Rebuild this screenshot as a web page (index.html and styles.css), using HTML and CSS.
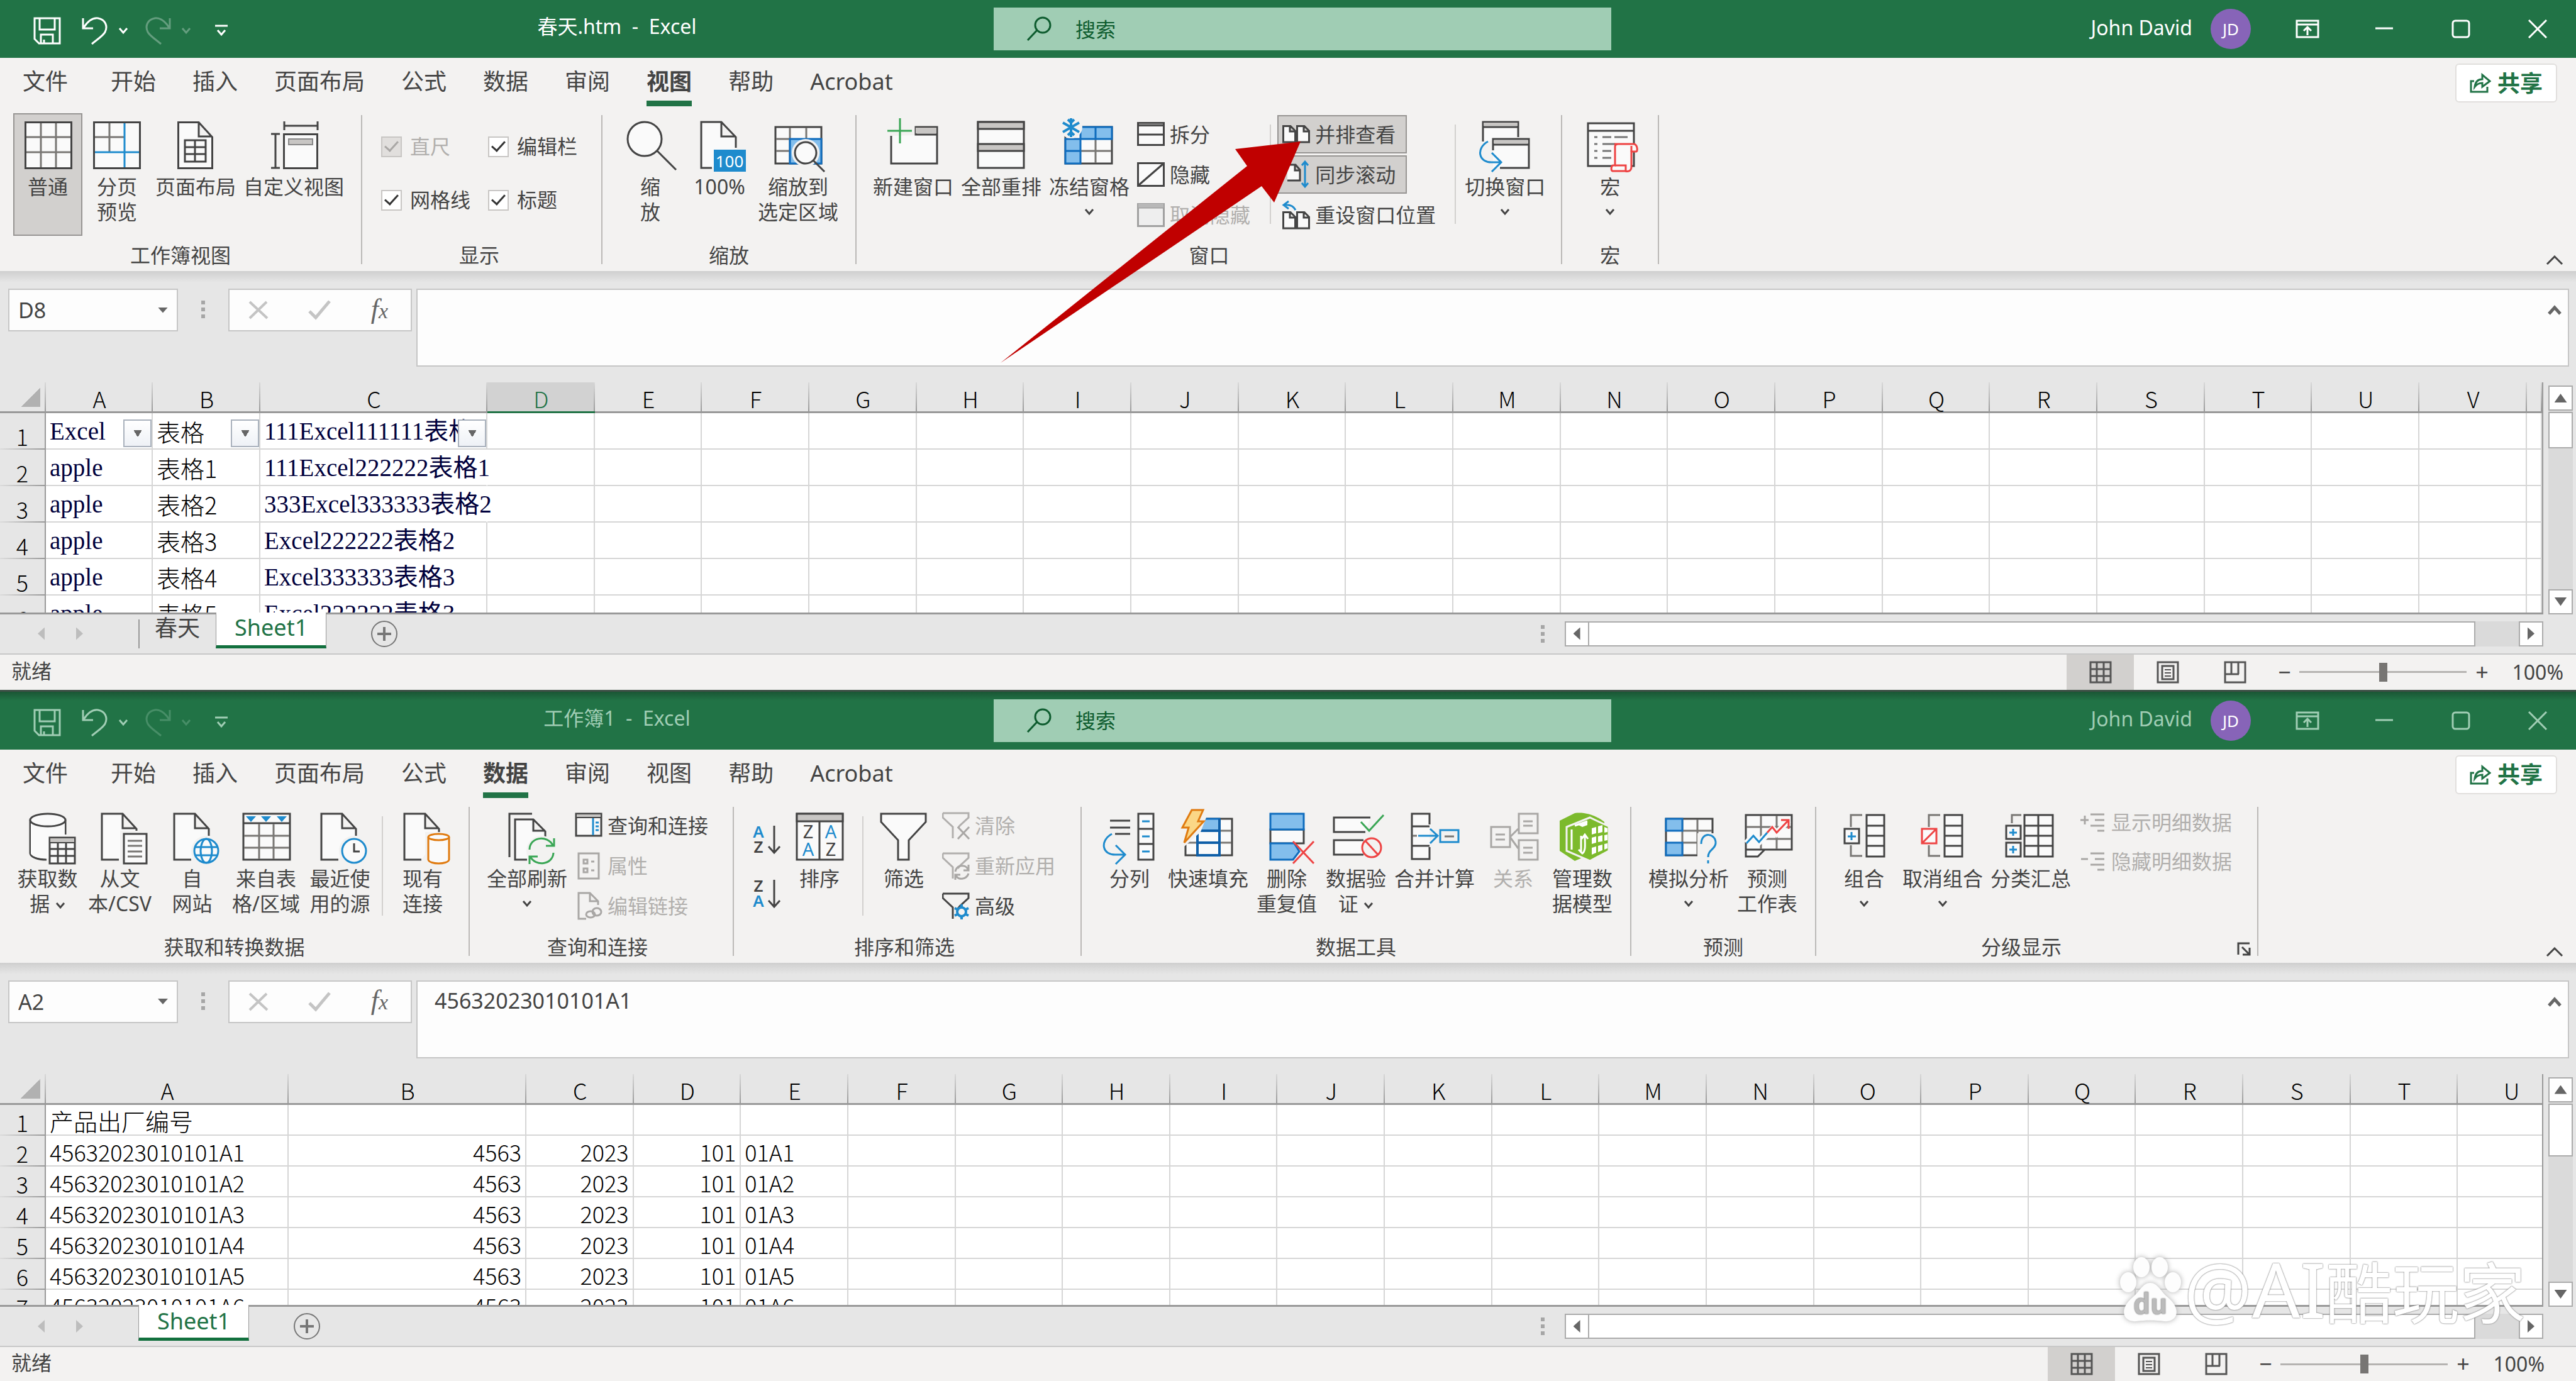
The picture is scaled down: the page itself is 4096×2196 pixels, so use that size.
FILE: index.html
```html
<!DOCTYPE html>
<html lang="zh-CN">
<head>
<meta charset="utf-8">
<title>Excel</title>
<link rel="stylesheet" href="styles.css">
</head>
<body>
<svg class="sprite" aria-hidden="true">
  <symbol id="save" viewBox="0 0 44 44"><path class="c" d="M2 2H42V42H9L2 35ZM10 2V20H34V2M12 42V28H31V42M17 42V36"/></symbol>
  <symbol id="undo" viewBox="0 0 42 44"><path class="c" d="M2 2V18H18M3 17C10 6 18 1 26 2C37 4 42 14 37 24C34 30 24 36 16 43"/></symbol>
  <symbol id="redo" viewBox="0 0 42 44"><path class="c" d="M40 2V18H24M39 17C32 6 24 1 16 2C5 4 0 14 5 24C8 30 18 36 26 43"/></symbol>
  <symbol id="chev" viewBox="0 0 16 12"><path class="c" d="M2 2L8 9L14 2"/></symbol>
  <symbol id="more" viewBox="0 0 20 20"><path class="c" d="M0 2H20M4 9L10 16L16 9"/></symbol>
  <symbol id="find" viewBox="0 0 40 40"><circle class="c" cx="26" cy="14" r="12"/><path class="c" d="M17 22L2 38"/></symbol>
  <symbol id="ribbonopt" viewBox="0 0 38 30"><path class="c" d="M2 2H36V28H2ZM2 8H36M19 25V13M13 18L19 12L25 18"/></symbol>
  <symbol id="min" viewBox="0 0 30 30"><path class="c" d="M1 14H29"/></symbol>
  <symbol id="max" viewBox="0 0 30 30"><rect class="c" x="2" y="2" width="26" height="26" rx="4"/></symbol>
  <symbol id="close" viewBox="0 0 30 30"><path class="c" d="M1 1L29 29M29 1L1 29"/></symbol>
  <symbol id="share" viewBox="0 0 34 32"><path class="c" d="M7 13H2V30H28V22M8 22C9 14 13 10 20 10V3L32 13L20 22V16C15 16 11 18 8 22Z"/></symbol>
  <symbol id="up" viewBox="0 0 28 16"><path class="c" d="M2 14L14 2L26 14"/></symbol>
  <symbol id="upbold" viewBox="0 0 22 16"><path d="M2 14L11 4L20 14" fill="none" stroke="#666" stroke-width="5"/></symbol>
  <symbol id="cancel" viewBox="0 0 32 30"><path d="M2 2L30 28M29 2L2 28" fill="none" stroke="#c4c4c4" stroke-width="4"/></symbol>
  <symbol id="accept" viewBox="0 0 36 32"><path d="M2 18L12 28L34 2" fill="none" stroke="#c4c4c4" stroke-width="5"/></symbol>
  <symbol id="plus" viewBox="0 0 44 44"><circle cx="22" cy="22" r="20" fill="none" stroke="#777" stroke-width="2"/><path d="M22 11V33M11 22H33" stroke="#777" stroke-width="4"/></symbol>
  <symbol id="v1" viewBox="0 0 36 36"><path d="M2 2H34V34H2ZM12 2V34M23 2V34M2 13H34M2 24H34" fill="none" stroke="#555" stroke-width="3"/></symbol>
  <symbol id="v2" viewBox="0 0 36 36"><path d="M2 2H34V34H2ZM9 8H27V29H9Z" fill="none" stroke="#555" stroke-width="3"/><path d="M13 14H23M13 19H23M13 24H23" stroke="#555" stroke-width="2"/></symbol>
  <symbol id="v3" viewBox="0 0 36 36"><path d="M2 2H34V34H2ZM12 2V20M23 2V21M2 21H24" fill="none" stroke="#555" stroke-width="3"/></symbol>
  <symbol id="funnel" viewBox="0 0 44 44"><path d="M1 2H42V9L28 22L25 26M17 42V24L1 9V2" fill="none" stroke="currentColor" stroke-width="3"/></symbol>
  <symbol id="doc" viewBox="0 0 84 88"><path class="k" d="M40 80H13V7H46L68 31V42M46 7V30H68"/></symbol>
</svg>

<section class="window window-front">
  <header class="titlebar">
    <div class="title-left">
      <div class="quick">
        <button aria-label="保存"><svg width="44" height="44"><use href="#save"/></svg></button>
        <button class="undo" aria-label="撤消"><svg width="42" height="44"><use href="#undo"/></svg></button>
        <button class="drop" aria-label="撤消选项"><svg width="16" height="12"><use href="#chev"/></svg></button>
        <button class="redo faded" aria-label="恢复"><svg width="42" height="44"><use href="#redo"/></svg></button>
        <button class="drop faded" aria-label="恢复选项"><svg width="16" height="12"><use href="#chev"/></svg></button>
        <button class="custom" aria-label="自定义快速访问工具栏"><svg width="20" height="20"><use href="#more"/></svg></button>
      </div>
      <h1>春天.htm&nbsp; -&nbsp; Excel</h1>
    </div>
    <label class="search"><svg width="40" height="40"><use href="#find"/></svg><input type="text" placeholder="搜索" aria-label="搜索"></label>
    <div class="title-right">
      <span class="user">John David</span><span class="avatar">JD</span>
      <button aria-label="功能区显示选项"><svg width="38" height="30"><use href="#ribbonopt"/></svg></button>
      <button aria-label="最小化"><svg width="30" height="30"><use href="#min"/></svg></button>
      <button aria-label="最大化"><svg width="30" height="30"><use href="#max"/></svg></button>
      <button aria-label="关闭"><svg width="30" height="30"><use href="#close"/></svg></button>
    </div>
  </header>
  <nav class="tabs">
    <a class="file" href="#file">文件</a><a href="#home">开始</a><a href="#insert">插入</a><a href="#layout">页面布局</a><a href="#formulas">公式</a><a href="#data">数据</a><a href="#review">审阅</a><a class="active" href="#view">视图</a><a href="#help">帮助</a><a href="#acrobat">Acrobat</a>
    <button class="share"><svg width="34" height="32"><use href="#share"/></svg>共享</button>
  </nav>
  <div class="ribbon">
    <section class="group">
      <div class="tools">
        <button class="tile pressed"><svg class="icon"><path class="k" d="M6.500 7.500H79.500V80.500H6.500Z"/><path class="g" d="M31 9V79M55 9V79M8 31H78M8 55H78"/></svg>普通</button>
        <button class="tile"><svg class="icon"><path class="k" d="M5.500 7.500H78.500V80.500H5.500Z"/><path class="g" d="M30 9V54M7 31H53"/><path class="b" d="M54 9V79M7 55H77"/></svg>分页<br>预览</button>
        <button class="tile"><svg class="icon"><path class="k" d="M14.500 7.500H47L68.500 31V80.500H14.500ZM47 7.500V30H68"/><path class="k" d="M25 36H58V70H25ZM41 36V70M25 47H58M25 58H58"/></svg>页面布局</button>
        <button class="tile"><svg class="icon"><path class="k" d="M26.500 26.500H79.500V80.500H26.500Z"/><path class="n" d="M27 6V20M80 6V20M27 13H80M6 26H20M6 80H20M13 26V80"/><path fill="#c8c6c4" stroke="#888" stroke-width="2" d="M34 34H72V43H34Z"/></svg>自定义视图</button>
      </div>
      <h2>工作簿视图</h2>
    </section>
    <section class="group show">
      <div class="checks">
        <label class="off"><input type="checkbox" checked disabled>直尺</label>
        <label><input type="checkbox" checked>编辑栏</label>
        <label><input type="checkbox" checked>网格线</label>
        <label><input type="checkbox" checked>标题</label>
      </div>
      <h2>显示</h2>
    </section>
    <section class="group">
      <div class="tools">
        <button class="tile"><svg class="icon"><circle class="k" cx="33" cy="34" r="27"/><path class="n" d="M53 53L83 83"/></svg>缩<br>放</button>
        <button class="tile"><svg class="icon"><path class="k" d="M30 80H13V7H45L68 31V48M45 7V30H68"/><path fill="#1e8bcd" d="M33 51H84V86H33Z"/><text x="58" y="79" class="badge">100</text></svg>100%</button>
        <button class="tile"><svg class="icon"><path class="k" d="M6 15H79V73H6Z"/><path class="g" d="M29 16V72M55 16V34M7 34H29M7 53H29"/><path class="f" d="M29 34H79V73H29Z"/><circle cx="54" cy="56" r="22" fill="#f3f2f1"/><circle class="k" cx="54" cy="56" r="17"/><path class="n" d="M66 68L84 86"/></svg>缩放到<br>选定区域</button>
      </div>
      <h2>缩放</h2>
    </section>
    <section class="group view-window">
      <div class="tools">
        <button class="tile"><svg class="icon"><path class="k" d="M7 29V73H80V15H46V27H80M7 29H7"/><path fill="#c8c6c4" d="M46 16H79V25H46Z"/><path d="M21 1V41M1 21H40" class="e"/></svg>新建窗口</button>
        <button class="tile"><svg class="icon"><path class="k" d="M5 7H78V80H5Z"/><path fill="#c8c6c4" stroke="#444" stroke-width="3" d="M5 7H78V18H5ZM5 42H78V53H5Z"/></svg>全部重排</button>
        <button class="tile"><svg class="icon"><path class="k" d="M4 15H78V73H4Z"/><path class="g" d="M52 34V72M29 53H77"/><path class="f" d="M28 15H78V34H28ZM4 34H28V73H4ZM52 15V34M4 53H28"/><circle cx="13" cy="15" r="18" fill="#f3f2f1"/><path d="M13 1V31M0 8L26 23M0 23L26 8M8 3L13 8L18 3M8 28L13 23L18 28" fill="none" stroke="#1e8bcd" stroke-width="4"/></svg>冻结窗格<svg class="chev"><use href="#chev"/></svg></button>
        <div class="stack">
          <button class="small"><svg class="mini"><path class="k" d="M1.500 3.500H42.500V38.500H1.500ZM2 22H42"/><path fill="#777" stroke="#444" stroke-width="2" d="M2 3H42V8H2Z"/></svg>拆分</button>
          <button class="small"><svg class="mini"><path class="k" d="M1.500 3.500H42.500V39.500H1.500ZM3 38L41 5"/></svg>隐藏</button>
          <button class="small off" disabled><svg class="mini"><path fill="#eee" stroke="#a0a0a0" stroke-width="3" d="M1.500 4.500H42.500V39.500H1.500ZM2 10H42"/><path fill="#b8b8b8" d="M2 4H42V10H2Z"/></svg>取消隐藏</button>
        </div>
        <i class="split"></i>
        <div class="stack sync">
          <button class="small pressed"><svg class="mini"><path class="k" d="M1.500 8.500H13L20.500 16V34H1.500ZM12 9V17H20M23.500 8.500H35L42.500 16V34H23.500ZM34 9V17H42"/></svg>并排查看</button>
          <button class="small pressed"><svg class="mini"><path class="k" d="M8 6H21L28 14V31H8M20 6V15H28"/><path class="b" d="M36 1V41M31 7L36 1L41 7M31 35L36 41L41 35"/></svg>同步滚动</button>
          <button class="small"><svg class="mini"><path class="k" d="M1.500 17.500H13L20.500 25V43H1.500ZM12 18V26H20M23.500 17.500H35L42.500 25V43H23.500ZM34 18V26H42"/><path class="b" d="M10 0L2 6L10 12M3 6C12 5 18 8 21 14"/></svg>重设窗口位置</button>
        </div>
        <i class="split"></i>
        <button class="tile"><svg class="icon"><path class="k" d="M7 38V7H63V31M7 15H63"/><path fill="#c8c6c4" d="M8 8H62V13H8Z"/><path fill="#fafafa" d="M23 35H80V80H23Z"/><path class="n" d="M23 52V34H80V80H34M23 43H80"/><path fill="#c8c6c4" d="M24 36H79V41H24Z"/><path d="M15 38C-4 48 -1 72 22 71H34M21 56L36 71L21 86" class="b"/></svg>切换窗口<svg class="chev"><use href="#chev"/></svg></button>
      </div>
      <h2>窗口</h2>
    </section>
    <section class="group">
      <div class="tools">
        <button class="tile"><svg class="icon"><path class="k" d="M7 9H80V77H7ZM7 21H80"/><path stroke="#777" stroke-width="3" d="M17 31H22M30 31H44M49 31H70M17 42H22M30 42H50M17 53H22M30 53H44M17 64H22M30 64H44"/><path d="M49 42H80C86 43 86 53 84 54H76V78C76 86 70 86 66 85H46C43 84 44 76 47 76H50V46C50 43 52 42 55 42" fill="#fafafa" stroke="#ee4444" stroke-width="3"/><path d="M50 76H67V84M76 54V45" fill="none" stroke="#ee4444" stroke-width="3"/></svg>宏<svg class="chev"><use href="#chev"/></svg></button>
      </div>
      <h2>宏</h2>
    </section>
    <button class="collapse" aria-label="折叠功能区"><svg width="28" height="16"><use href="#up"/></svg></button>
  </div>
  <div class="formula-bar">
    <div class="namebox"><input type="text" value="D8" aria-label="名称框"><i class="tri down"></i></div>
    <i class="dots"></i>
    <div class="fx"><button aria-label="取消"><svg width="32" height="30"><use href="#cancel"/></svg></button><button aria-label="输入"><svg width="36" height="32"><use href="#accept"/></svg></button><button class="fn" aria-label="插入函数"><em>f</em><em class="x">x</em></button></div>
    <div class="formula"><textarea aria-label="编辑栏"></textarea><svg width="22" height="16"><use href="#upbold"/></svg></div>
  </div>
  <div class="sheet-area">
    <div class="sheet">
      <table class="first">
        <colgroup><col class="w-head"><col class="w-a"><col class="w-b"><col class="w-c"><col span="19"><col class="w-end"></colgroup>
        <thead><tr><th class="corner"><th>A<th>B<th>C<th class="sel">D<th>E<th>F<th>G<th>H<th>I<th>J<th>K<th>L<th>M<th>N<th>O<th>P<th>Q<th>R<th>S<th>T<th>U<th>V<th></tr></thead>
        <tbody>
        <tr><th>1<td class="t">Excel<button class="filter" aria-label="筛选"></button><td class="cn">表格<button class="filter" aria-label="筛选"></button><td class="t">111Excel111111表格<button class="filter" aria-label="筛选"></button><td><td><td><td><td><td><td><td><td><td><td><td><td><td><td><td><td><td><td><td></tr>
        <tr><th>2<td class="t">apple<td class="cn">表格1<td class="t over">111Excel222222表格1<td><td><td><td><td><td><td><td><td><td><td><td><td><td><td><td><td><td><td><td></tr>
        <tr><th>3<td class="t">apple<td class="cn">表格2<td class="t over">333Excel333333表格2<td><td><td><td><td><td><td><td><td><td><td><td><td><td><td><td><td><td><td><td></tr>
        <tr><th>4<td class="t">apple<td class="cn">表格3<td class="t">Excel222222表格2<td><td><td><td><td><td><td><td><td><td><td><td><td><td><td><td><td><td><td><td></tr>
        <tr><th>5<td class="t">apple<td class="cn">表格4<td class="t">Excel333333表格3<td><td><td><td><td><td><td><td><td><td><td><td><td><td><td><td><td><td><td><td></tr>
        <tr><th>6<td class="t">apple<td class="cn">表格5<td class="t">Excel222222表格3<td><td><td><td><td><td><td><td><td><td><td><td><td><td><td><td><td><td><td><td></tr>
        </tbody>
      </table>
    </div>
    <div class="vscroll"><button aria-label="向上"><i class="tri up"></i></button><div class="vthumb"></div><button class="end" aria-label="向下"><i class="tri down"></i></button></div>
  </div>
  <div class="sheet-bar">
    <button class="nav" aria-label="上一张"><i class="tri left"></i></button><button class="nav" aria-label="下一张"><i class="tri right"></i></button>
    <div class="sheet-tabs"><a class="first-tab" href="#s1">春天</a><a class="active" href="#s2">Sheet1</a></div>
    <button class="add" aria-label="新工作表"><svg width="44" height="44"><use href="#plus"/></svg></button>
    <i class="dots"></i>
    <div class="hscroll"><button aria-label="向左"><i class="tri left"></i></button><div class="hthumb"></div><button aria-label="向右"><i class="tri right"></i></button></div>
  </div>
  <footer class="status">
    <span class="ready">就绪</span>
    <button class="view on" aria-label="普通"><svg width="36" height="36"><use href="#v1"/></svg></button><button class="view" aria-label="页面布局"><svg width="36" height="36"><use href="#v2"/></svg></button><button class="view" aria-label="分页预览"><svg width="36" height="36"><use href="#v3"/></svg></button>
    <button class="zoom" aria-label="缩小">−</button><input type="range" min="0" max="100" value="50" aria-label="显示比例"><button class="zoom" aria-label="放大">+</button><span class="percent">100%</span>
  </footer>
  <svg class="pointer" viewBox="0 0 480 354" aria-hidden="true"><path fill="#c00000" d="M1 353L393 40L374 13L478 1L436 98L416 72Z"/></svg>
</section>

<section class="window window-back">
  <header class="titlebar">
    <div class="title-left">
      <div class="quick">
        <button aria-label="保存"><svg width="44" height="44"><use href="#save"/></svg></button>
        <button class="undo" aria-label="撤消"><svg width="42" height="44"><use href="#undo"/></svg></button>
        <button class="drop" aria-label="撤消选项"><svg width="16" height="12"><use href="#chev"/></svg></button>
        <button class="redo faded" aria-label="恢复"><svg width="42" height="44"><use href="#redo"/></svg></button>
        <button class="drop faded" aria-label="恢复选项"><svg width="16" height="12"><use href="#chev"/></svg></button>
        <button class="custom" aria-label="自定义快速访问工具栏"><svg width="20" height="20"><use href="#more"/></svg></button>
      </div>
      <h1>工作簿1&nbsp; -&nbsp; Excel</h1>
    </div>
    <label class="search"><svg width="40" height="40"><use href="#find"/></svg><input type="text" placeholder="搜索" aria-label="搜索"></label>
    <div class="title-right">
      <span class="user">John David</span><span class="avatar">JD</span>
      <button aria-label="功能区显示选项"><svg width="38" height="30"><use href="#ribbonopt"/></svg></button>
      <button aria-label="最小化"><svg width="30" height="30"><use href="#min"/></svg></button>
      <button aria-label="最大化"><svg width="30" height="30"><use href="#max"/></svg></button>
      <button aria-label="关闭"><svg width="30" height="30"><use href="#close"/></svg></button>
    </div>
  </header>
  <nav class="tabs">
    <a class="file" href="#file">文件</a><a href="#home">开始</a><a href="#insert">插入</a><a href="#layout">页面布局</a><a href="#formulas">公式</a><a class="active" href="#data">数据</a><a href="#review">审阅</a><a href="#view">视图</a><a href="#help">帮助</a><a href="#acrobat">Acrobat</a>
    <button class="share"><svg width="34" height="32"><use href="#share"/></svg>共享</button>
  </nav>
  <div class="ribbon">
    <section class="group get-data">
      <div class="tools">
        <button class="tile"><svg class="icon"><path class="k" d="M14 17V70C15 76 26 80 40 80M70 40V17"/><path fill="#fafafa" d="M15 17H69V42H44V78C28 79 15 74 15 70Z"/><ellipse class="k" cx="42" cy="17" rx="28" ry="10"/><path class="k" d="M45 45H85V86H45ZM58 53V86M71 53V86M45 63H85M45 74H85"/><path fill="#c8c6c4" stroke="#444" stroke-width="2" d="M45 45H85V53H45Z"/></svg>获取数<br>据 <svg class="chev inline"><use href="#chev"/></svg></button>
        <button class="tile"><svg class="icon"><use href="#doc"/><path d="M42 34H88V88H42Z" fill="#f3f2f1"/><path class="k" d="M48 39H84V86H48Z"/><path class="g" d="M54 50H77M54 58H77M54 67H77M54 75H77"/></svg>从文<br>本/CSV</button>
        <button class="tile"><svg class="icon"><use href="#doc"/><circle cx="64" cy="66" r="24" fill="#f3f2f1"/><circle class="b w" cx="64" cy="66" r="19"/><path class="b" d="M46 60H82M46 73H82"/><ellipse class="b" cx="64" cy="66" rx="9" ry="19"/></svg>自<br>网站</button>
        <button class="tile"><svg class="icon"><path class="k" d="M6 7H80V80H6ZM6 22H80"/><path class="g" d="M31 23V79M54 23V79M7 42H79M7 61H79"/><path fill="#1e8bcd" d="M10 11H26L18 20ZM34 11H50L42 20ZM59 11H75L67 20Z"/></svg>来自表<br>格/区域</button>
        <button class="tile"><svg class="icon"><use href="#doc"/><circle cx="65" cy="66" r="24" fill="#f3f2f1"/><circle class="b w" cx="65" cy="66" r="19"/><path class="n" d="M65 54V67H74"/></svg>最近使<br>用的源</button>
        <i class="split"></i>
        <button class="tile"><svg class="icon"><use href="#doc"/><path d="M46 36H88V88H46Z" fill="#f3f2f1"/><path d="M51 44V80C53 88 82 88 84 80V44" class="o"/><ellipse class="o" cx="67.500" cy="44" rx="16.500" ry="5"/></svg>现有<br>连接</button>
      </div>
      <h2>获取和转换数据</h2>
    </section>
    <section class="group queries">
      <div class="tools">
        <button class="tile"><svg class="icon"><path class="n" d="M14 76V7H50"/><path class="k" d="M42 80H23V16H52L71 35V44M52 16V34H71"/><circle cx="65" cy="66" r="24" fill="#f3f2f1"/><path class="e" d="M46 64C46 44 74 40 83 57M85 46V58H72M84 69C83 88 56 92 47 75M46 87V75H59"/></svg>全部刷新<svg class="chev"><use href="#chev"/></svg></button>
        <div class="stack">
          <button class="small"><svg class="mini"><path class="k" d="M2 3H42V38H2Z"/><path fill="#c8c6c4" stroke="#444" stroke-width="2" d="M2 3H42V9H2Z"/><path class="b" d="M29 10V37M33 17H38M33 23H38M33 29H38"/></svg>查询和连接</button>
          <button class="small off" disabled><svg class="mini"><path class="d" d="M6 2H38V42H6Z"/><path class="d" d="M14 12H20V18H14ZM14 26H20V32H14ZM26 15H31M26 29H31"/></svg>属性</button>
          <button class="small off" disabled><svg class="mini"><path class="d" d="M18 42H6V1H24L37 14V20M24 1V14H37"/><ellipse class="d" cx="25" cy="35" rx="7" ry="5"/><ellipse class="d" cx="35" cy="31" rx="7" ry="6"/></svg>编辑链接</button>
        </div>
      </div>
      <h2>查询和连接</h2>
    </section>
    <section class="group sorting">
      <div class="tools">
        <div class="az">
          <button aria-label="升序"><svg><text x="10" y="29" class="blue">A</text><text x="10" y="53">Z</text><path class="n" d="M35 10V53M26 43L35 53L44 43"/></svg></button>
          <button aria-label="降序"><svg><text x="10" y="29">Z</text><text x="10" y="53" class="blue">A</text><path class="n" d="M35 10V53M26 43L35 53L44 43"/></svg></button>
        </div>
        <button class="tile"><svg class="icon sort"><path class="k" d="M6 7H79V80H6ZM42 19V80"/><path fill="#c8c6c4" stroke="#444" stroke-width="3" d="M6 7H79V19H6Z"/><text x="24" y="46">Z</text><text x="24" y="74" class="blue">A</text><text x="60" y="46" class="blue">A</text><text x="60" y="74">Z</text></svg>排序</button>
        <i class="split"></i>
        <button class="tile"><svg class="icon"><path class="k" d="M6 7H77V20L50 49V80H33V49L6 20Z"/></svg>筛选</button>
        <div class="stack">
          <button class="small off" disabled><svg class="mini"><use href="#funnel"/><path class="d" d="M25 24L43 43M43 24L25 43"/></svg>清除</button>
          <button class="small off" disabled><svg class="mini"><use href="#funnel"/><path class="d" d="M21 31C23 20 37 19 41 27M42 20V29H34M42 34C39 44 25 45 22 37M21 44V36H29"/></svg>重新应用</button>
          <button class="small"><svg class="mini"><use href="#funnel"/><circle cx="31" cy="31" r="7" fill="none" stroke="#1e8bcd" stroke-width="4"/><path d="M31 19V25M31 37V43M20 25L26 28M36 34L42 37M42 25L36 28M26 34L20 37" stroke="#1e8bcd" stroke-width="4"/></svg>高级</button>
        </div>
      </div>
      <h2>排序和筛选</h2>
    </section>
    <section class="group">
      <div class="tools">
        <button class="tile"><svg class="icon"><path class="n" d="M11 18H43M11 29H43M19 39H43"/><path class="k" d="M56 7H80V80H56ZM56 31H80M56 55H80"/><path class="b" d="M62 19H74M62 43H74M62 67H74M14 39C-6 50 -2 74 22 72H34M20 57L35 72L20 87"/></svg>分列</button>
        <button class="tile"><svg class="icon"><path class="k" d="M6 15H80V73H6Z"/><path class="g" d="M60 34H79M60 53H79M7 53H25"/><path class="f" d="M25 15H60V34H25Z"/><path d="M25 34V73H60V15M25 34H60M25 53H60" fill="none" stroke="#0f5fa8" stroke-width="4"/><path d="M0 0H44L30 36L3 60Z" fill="#f3f2f1"/><path d="M16 1H34L26 19H35L4 53L11 29H1Z" fill="#fbd786" stroke="#e07b10" stroke-width="3"/></svg>快速填充</button>
        <button class="tile"><svg class="icon"><path class="k" d="M16 32H69V54H16Z"/><path class="f" d="M16 7H69V32H16ZM16 54H54L62 67L52 80H16Z"/><path class="r" d="M52 51L85 86M85 51L52 86"/></svg>删除<br>重复值</button>
        <button class="tile"><svg class="icon"><path class="k" d="M65 13H7V36H57M54 49H7V72H54"/><path class="e" d="M50 20L63 34L86 9"/><circle class="r" cx="67" cy="61" r="15"/><path class="r" d="M57 50L77 72"/></svg>数据验<br>证 <svg class="chev inline"><use href="#chev"/></svg></button>
        <button class="tile"><svg class="icon"><path class="k" d="M34 24V7H6V79H34V60M6 27H34M6 58H34"/><path class="b" d="M16 42H46M35 31L47 42L35 54M51 33H80V52H51Z"/><path class="g" d="M7 42H14M58 43H73"/></svg>合并计算</button>
        <button class="tile off" disabled><svg class="icon"><path class="d" d="M7 28H37V60H7ZM51 7H81V38H51ZM51 49H81V80H51ZM37 44L50 31M37 44L50 62M14 40H29M14 48H29M58 19H73M58 26H73M58 61H73M58 69H73"/></svg>关系</button>
        <button class="tile"><svg class="icon"><path fill="#7cba2c" d="M6 18L30 6C44 4 62 8 77 20V62L30 82L6 66Z"/><path fill="#7cba2c" stroke="#f3f2f1" stroke-width="3" d="M17 28L54 13L84 27V66L54 82L17 66Z"/><path fill="none" stroke="#fff" stroke-width="3" d="M25 32V64M30 26L50 19M40 68V42M36 64L42 70C48 66 46 54 46 42M41 47L46 40L51 47"/><path fill="#fff" d="M57 30L64 28V38L57 40ZM67 27L74 25V36L67 38ZM57 45L64 43V53L57 55ZM67 43L74 41V51L67 52ZM57 61L64 59V69L57 72ZM67 58L74 56V65L67 68ZM77 28L82 30V36L77 37ZM77 41L82 40V49L77 50ZM77 55L82 54V62L77 64ZM36 25L50 19V25L42 28Z"/></svg>管理数<br>据模型</button>
      </div>
      <h2>数据工具</h2>
    </section>
    <section class="group">
      <div class="tools">
        <button class="tile"><svg class="icon"><path class="k" d="M6 15H80V73H6Z"/><path class="g" d="M56 16V72M32 34H79M32 53H79M32 16V72"/><path class="f" d="M6 15H32V34H6ZM6 53H32V73H6Z"/><path d="M56 38H90V88H56Z" fill="#f3f2f1"/><path class="b" d="M62 55C62 34 86 38 85 54C84 64 73 64 73 76M73 81V86"/></svg>模拟分析<svg class="chev"><use href="#chev"/></svg></button>
        <button class="tile"><svg class="icon"><path class="k" d="M8 64V75H27L38 64M8 9H81V64H8Z"/><path class="g" d="M32 10V63M57 10V63M9 28H80M9 47H80"/><path d="M9 54L20 42L29 52L51 31L57 38L76 17" fill="none" stroke="#fafafa" stroke-width="10"/><path class="b" d="M9 54L20 42L29 52L42 37"/><path class="r" d="M42 37L50 28L57 37L76 17M64 17H76V31"/></svg>预测<br>工作表</button>
      </div>
      <h2>预测</h2>
    </section>
    <section class="group outline">
      <div class="tools">
        <button class="tile"><svg class="icon"><path class="g" d="M39 9H21V28M21 57V74H39"/><path class="k" d="M46 9H74V75H46ZM46 26H74M46 42H74M46 58H74M11 31H34V54H11Z"/><path class="b" d="M22 36V49M16 43H29"/></svg>组合<svg class="chev"><use href="#chev"/></svg></button>
        <button class="tile"><svg class="icon"><path class="g" d="M38 9H20V28M20 57V74H38"/><path class="k" d="M45 9H73V75H45ZM45 26H73M45 42H73M45 58H73"/><path class="r w" d="M9 31H32V54H9ZM10 53L31 32"/></svg>取消组合<svg class="chev"><use href="#chev"/></svg></button>
        <button class="tile"><svg class="icon"><path class="g" d="M27 9H12V22"/><path class="k" d="M32 9H77V75H32ZM54 9V75M32 26H77M32 42H77M32 58H77M3 26H26V47H3ZM3 53H26V75H3Z"/><path class="b" d="M14 31V42M8 37H20M14 58V70M8 64H20"/></svg>分类汇总</button>
        <div class="stack detail">
          <button class="small off" disabled><svg class="mini"><path class="d" d="M3 18H16M10 11V25M19 9H41M26 18H41M19 27H41M30 35H41"/></svg>显示明细数据</button>
          <button class="small off" disabled><svg class="mini"><path class="d" d="M4 18H15M19 9H41M26 18H41M19 27H41M30 35H41"/></svg>隐藏明细数据</button>
        </div>
      </div>
      <h2>分级显示</h2>
      <button class="launcher" aria-label="分级显示设置"><svg width="22" height="22"><path class="n" d="M2 20V2H20M8 8L19 19M20 9V20H9"/></svg></button>
    </section>
    <button class="collapse" aria-label="折叠功能区"><svg width="28" height="16"><use href="#up"/></svg></button>
  </div>
  <div class="formula-bar">
    <div class="namebox"><input type="text" value="A2" aria-label="名称框"><i class="tri down"></i></div>
    <i class="dots"></i>
    <div class="fx"><button aria-label="取消"><svg width="32" height="30"><use href="#cancel"/></svg></button><button aria-label="输入"><svg width="36" height="32"><use href="#accept"/></svg></button><button class="fn" aria-label="插入函数"><em>f</em><em class="x">x</em></button></div>
    <div class="formula"><textarea aria-label="编辑栏">45632023010101A1</textarea><svg width="22" height="16"><use href="#upbold"/></svg></div>
  </div>
  <div class="sheet-area">
    <div class="sheet">
      <table class="second">
        <colgroup><col class="w-head"><col class="w-wide"><col class="w-mid"><col span="19"></colgroup>
        <thead><tr><th class="corner"><th>A<th>B<th>C<th>D<th>E<th>F<th>G<th>H<th>I<th>J<th>K<th>L<th>M<th>N<th>O<th>P<th>Q<th>R<th>S<th>T<th>U</tr></thead>
        <tbody>
        <tr><th>1<td class="cn">产品出厂编号<td><td><td><td><td><td><td><td><td><td><td><td><td><td><td><td><td><td><td><td></tr>
        <tr><th>2<td>45632023010101A1<td class="num">4563<td class="num">2023<td class="num">101<td>01A1<td><td><td><td><td><td><td><td><td><td><td><td><td><td><td><td></tr>
        <tr><th>3<td>45632023010101A2<td class="num">4563<td class="num">2023<td class="num">101<td>01A2<td><td><td><td><td><td><td><td><td><td><td><td><td><td><td><td></tr>
        <tr><th>4<td>45632023010101A3<td class="num">4563<td class="num">2023<td class="num">101<td>01A3<td><td><td><td><td><td><td><td><td><td><td><td><td><td><td><td></tr>
        <tr><th>5<td>45632023010101A4<td class="num">4563<td class="num">2023<td class="num">101<td>01A4<td><td><td><td><td><td><td><td><td><td><td><td><td><td><td><td></tr>
        <tr><th>6<td>45632023010101A5<td class="num">4563<td class="num">2023<td class="num">101<td>01A5<td><td><td><td><td><td><td><td><td><td><td><td><td><td><td><td></tr>
        <tr><th>7<td>45632023010101A6<td class="num">4563<td class="num">2023<td class="num">101<td>01A6<td><td><td><td><td><td><td><td><td><td><td><td><td><td><td><td></tr>
        </tbody>
      </table>
    </div>
    <div class="vscroll"><button aria-label="向上"><i class="tri up"></i></button><div class="vthumb long"></div><button class="end" aria-label="向下"><i class="tri down"></i></button></div>
  </div>
  <div class="sheet-bar">
    <button class="nav" aria-label="上一张"><i class="tri left"></i></button><button class="nav" aria-label="下一张"><i class="tri right"></i></button>
    <div class="sheet-tabs"><a class="active" href="#s3">Sheet1</a></div>
    <button class="add" aria-label="新工作表"><svg width="44" height="44"><use href="#plus"/></svg></button>
    <i class="dots"></i>
    <div class="hscroll"><button aria-label="向左"><i class="tri left"></i></button><div class="hthumb"></div><button aria-label="向右"><i class="tri right"></i></button></div>
  </div>
  <footer class="status">
    <span class="ready">就绪</span>
    <button class="view on" aria-label="普通"><svg width="36" height="36"><use href="#v1"/></svg></button><button class="view" aria-label="页面布局"><svg width="36" height="36"><use href="#v2"/></svg></button><button class="view" aria-label="分页预览"><svg width="36" height="36"><use href="#v3"/></svg></button>
    <button class="zoom" aria-label="缩小">−</button><input type="range" min="0" max="100" value="50" aria-label="显示比例"><button class="zoom" aria-label="放大">+</button><span class="percent">100%</span>
  </footer>
  <div class="watermark">
    <svg viewBox="0 0 100 106" aria-hidden="true"><ellipse cx="36" cy="18" rx="13" ry="16"/><ellipse cx="65" cy="18" rx="13" ry="16"/><ellipse cx="15" cy="42" rx="13" ry="16"/><ellipse cx="86" cy="42" rx="13" ry="16"/><path d="M50 43C62 43 66 56 78 66C100 84 94 106 72 104C58 102 42 102 28 104C6 106 0 84 22 66C34 56 38 43 50 43Z"/><text x="50" y="92">du</text></svg>
    <span><span class="latin">@AI</span>酷玩家</span>
  </div>
</section>
</body>
</html>
```
FILE: styles.css
```css
* { box-sizing: border-box; }

body {
  margin: 0;
  height: 100vh;
  display: flex;
  flex-direction: column;
  overflow: hidden;
  background: #e6e6e6;
  color: #444;
  font-family: "Noto Sans", "Noto Sans CJK SC", sans-serif;
  font-size: 32px;
}

button, input, textarea {
  font: inherit;
  color: inherit;
  background: none;
  border: 0;
  padding: 0;
  margin: 0;
  outline: 0;
}
a { color: inherit; text-decoration: none; }
h1, h2 { margin: 0; font-size: 32px; font-weight: 400; }
svg { display: block; overflow: visible; flex: none; }
.sprite { position: absolute; width: 0; height: 0; }

/* icon strokes */
.c { fill: none; stroke: currentColor; stroke-width: 3; }
.k { fill: #fafafa; stroke: #444; stroke-width: 3; }
.n { fill: none; stroke: #444; stroke-width: 3; }
.g { fill: none; stroke: #797774; stroke-width: 3; }
.b { fill: none; stroke: #1e8bcd; stroke-width: 3; }
.e { fill: none; stroke: #3aa655; stroke-width: 3; }
.r { fill: none; stroke: #ee4444; stroke-width: 3; }
.o { fill: #fafafa; stroke: #e07b10; stroke-width: 3; }
.d { fill: none; stroke: #a9a7a5; stroke-width: 3; }
.f { fill: #83beec; stroke: #0f6cbd; stroke-width: 3; }
.w { fill: #fafafa; }
.badge { fill: #fff; font-size: 26px; text-anchor: middle; }

/* windows */
.window {
  position: relative;
  flex: 1 1 0;
  min-height: 0;
  display: flex;
  flex-direction: column;
}
.window-front { border-bottom: 3px solid #3d4f45; }

/* title bar */
.titlebar {
  display: grid;
  grid-template-columns: 1fr 24.25% 1fr;
  align-items: center;
  height: 92px;
  flex: none;
  padding-left: 46px;
  background: #217346;
  color: #fff;
}
.window-back .titlebar {
  background: linear-gradient(#1b5635, #217346 14px);
  color: #a0cdb4;
}
.title-left { display: flex; align-items: center; }
.quick { display: flex; align-items: center; padding: 6px 0 0 7px; }
.undo { margin-left: 33px; }
.redo { margin-left: 26px; }
.drop { margin-left: 16px; }
.custom { margin-left: 38px; }
.faded { opacity: .3; }
.title-left h1 { flex: 1; padding: 0 0 12px 20px; text-align: center; white-space: nowrap; }
.search {
  display: flex;
  align-items: center;
  gap: 38px;
  height: 68px;
  padding: 0 52px;
  background: #a0cdb4;
  color: #0e5c2f;
}
.search input { flex: 1; }
.search input::placeholder { color: #0e5c2f; opacity: 1; }
.title-right { display: flex; align-items: center; justify-content: flex-end; }
.title-right button { width: 122px; height: 88px; display: flex; align-items: center; justify-content: center; }
.user { padding-bottom: 6px; }
.avatar {
  width: 64px;
  height: 64px;
  margin: 0 29px;
  border-radius: 50%;
  background: #8764b8;
  color: #fff;
  font-size: 26px;
  line-height: 64px;
  text-align: center;
}

/* tabs */
.tabs {
  display: flex;
  align-items: flex-start;
  gap: 58px;
  flex: none;
  height: 88px;
  padding: 9px 30px 0 36px;
  background: #f3f2f1;
  font-size: 36px;
  line-height: 57px;
}
.tabs a { height: 68px; white-space: nowrap; }
.tabs .file { margin-right: 10px; }
.tabs .active { font-weight: 700; border-bottom: 9px solid #217346; }
.share {
  display: flex;
  align-items: center;
  justify-content: center;
  gap: 10px;
  width: 162px;
  height: 62px;
  margin-left: auto;
  border: 2px solid #e1dfdd;
  border-radius: 6px;
  background: #fff;
  color: #217346;
  font-weight: 700;
}

/* ribbon */
.ribbon {
  display: flex;
  flex: none;
  height: 251px;
  background: #f3f2f1;
}
.group {
  position: relative;
  display: flex;
  flex-direction: column;
  height: 237px;
  margin-top: 3px;
  padding: 0 21px;
  border-right: 2px solid #bbb9b7;
}
.group h2 { margin-top: auto; line-height: 28px; text-align: center; white-space: nowrap; }
.tools { display: flex; align-items: flex-start; margin-top: -3px; }
.tile {
  flex: none;
  min-width: 110px;
  padding: 6px 5px 0;
  border: 1px solid transparent;
  line-height: 40px;
  text-align: center;
  white-space: nowrap;
}
.icon { width: 84px; height: 88px; margin: 0 auto 2px; }
.chev { width: 16px; height: 12px; margin: 14px auto 0; }
.chev.inline { display: inline-block; vertical-align: middle; margin: 0; }
.pressed { background: #d2d0ce; border: 2px solid #979593; }
.tile.pressed { padding: 5px 4px 56px; }
.off { color: #b1afad; }

.stack { display: flex; flex-direction: column; align-items: flex-start; gap: 3px; padding-top: 3px; }
.small {
  display: flex;
  align-items: center;
  gap: 8px;
  height: 61px;
  padding: 0 6px;
  line-height: 40px;
  white-space: nowrap;
}
.mini { width: 44px; height: 44px; }
.split { width: 2px; height: 158px; margin-top: 18px; background: #d2d0ce; flex: none; }

.show { padding: 0 38px 0 30px; }
.checks {
  display: grid;
  grid-template-columns: 170px auto;
  row-gap: 45px;
  padding-top: 30px;
}
.checks label { display: flex; align-items: center; gap: 13px; height: 40px; line-height: 40px; white-space: nowrap; }
.checks input {
  appearance: none;
  width: 33px;
  height: 33px;
  border: 2px solid #c8c6c4;
  background: #fff;
  display: grid;
  place-items: center;
}
.checks input::after {
  content: "";
  width: 18px;
  height: 9px;
  border: solid #333;
  border-width: 0 0 3px 3px;
  rotate: -48deg;
  margin-bottom: 6px;
}
.checks .off input { background: #e1dfdd; }
.checks .off input::after { border-color: #a9a7a5; }

.view-window { padding: 0 19px 0 20px; }
.view-window .split { margin-left: 25px; margin-right: 10px; }
.view-window .sync + .split { margin-left: 22px; margin-right: 8px; }
.sync .small { padding: 0 8px; }
.sync .pressed { padding: 0 16px 0 6px; }

.get-data { padding: 0 18px; }
.get-data .tile { min-width: 115px; }
.get-data .split { margin-left: 9px; margin-right: 8px; }
.get-data .split + .tile { min-width: 110px; }
.queries { padding: 0 33px 0 21px; }
.sorting { padding: 0 34px 0 25px; }
.sorting .split { margin-left: 13px; margin-right: 9px; }
.az { display: flex; flex-direction: column; gap: 22px; padding: 23px 8px 0 4px; }
.az button, .az svg { width: 44px; height: 64px; }
.az text { font-size: 26px; font-weight: 600; text-anchor: middle; fill: #444; }
.sort text { font-size: 29px; text-anchor: middle; fill: #444; }
.az .blue, .sort .blue { fill: #1e8bcd; }
.outline { padding-right: 34px; }
.outline h2 { padding-right: 36px; }
.detail { gap: 1px; margin-top: -5px; }
.launcher { position: absolute; right: 10px; bottom: 0; }
.collapse { margin: auto 20px 9px auto; }

/* formula bar */
.formula-bar {
  display: flex;
  align-items: flex-start;
  flex: none;
  height: 177px;
  padding: 28px 11px 0 13px;
  background: linear-gradient(#cfcfcf, #e6e6e6 18px);
}
.namebox, .fx, .formula { display: flex; align-items: center; background: #fdfdfd; border: 2px solid #c6c6c6; }
.namebox { width: 270px; height: 68px; padding: 0 14px; }
.namebox input { flex: 1; min-width: 0; font-size: 34px; }
.dots { width: 6px; height: 28px; background: repeating-linear-gradient(#a6a6a6 0 6px, transparent 6px 11px); flex: none; }
.formula-bar .dots { margin: 19px 37px 0; }
.fx { width: 292px; height: 68px; padding: 0 36px 0 30px; justify-content: space-between; }
.fn { font-family: "Liberation Serif", serif; font-size: 44px; line-height: 60px; color: #666; }
.fn .x { font-size: 34px; }
.formula { flex: 1; height: 124px; margin-left: 7px; padding: 8px 10px 0 27px; align-items: flex-start; }
.formula textarea { flex: 1; height: 100px; resize: none; font-size: 34px; line-height: 44px; }
.formula svg { margin-top: 16px; }

/* sheet */
.sheet-area { display: flex; flex: 1 1 0; min-height: 0; padding-right: 5px; }
.sheet {
  flex: 1;
  min-width: 0;
  overflow: hidden;
  border-right: 2px solid #999;
  border-bottom: 3px solid #999;
  background: #fff;
}
table {
  width: 100%;
  table-layout: fixed;
  border-collapse: separate;
  border-spacing: 0;
  color: #000;
  font-family: "Noto Sans CJK SC", sans-serif;
  font-size: 36px;
  font-weight: 300;
  line-height: 44px;
}
.w-head { width: 73px; }
.w-a { width: 170px; }
.w-b { width: 171px; }
.w-c { width: 361px; }
.w-end { width: 24px; }
.second { width: calc(100% + 37px); }
.w-wide { width: 386px; }
.w-mid { width: 378px; }
td, th { padding: 0; vertical-align: bottom; font-weight: 300; white-space: nowrap; }
td { position: relative; padding: 0 6px 0 6px; border-right: 2px solid #d6d6d6; border-bottom: 2px solid #d6d6d6; }
thead th {
  height: 49px;
  border-bottom: 3px solid #999;
  background: linear-gradient(#d8d8d8, #999) right / 2px 100% no-repeat #e6e6e6;
  line-height: 42px;
}
tbody th {
  border-right: 2px solid #999;
  background: linear-gradient(to right, #dcdcdc, #999) bottom / 100% 2px no-repeat #e6e6e6;
}
thead .sel { background-color: #d2d2d2; border-bottom-color: #217346; color: #217346; }
thead .corner {
  background:
    linear-gradient(to bottom right, transparent 50%, #b1b1b1 50%) 33px 8px / 31px 31px no-repeat,
    linear-gradient(#d8d8d8, #999) right / 2px 100% no-repeat #e6e6e6;
}
.first tbody tr { height: 58px; }
.second tbody tr { height: 49px; }
.cn { font-size: 38px; }
.first .cn { padding-bottom: 5px; }
.t { font-family: "Liberation Serif", "Noto Sans CJK SC", serif; font-size: 39px; font-weight: 400; color: #00003c; padding-bottom: 5px; }
.over { border-right-color: #fff; }
.num { text-align: right; }
.filter {
  position: absolute;
  right: 0;
  bottom: 2px;
  width: 45px;
  height: 44px;
  border: 2px solid #aab2bd;
  background:
    conic-gradient(from -31deg at 50% 100%, #666 62deg, transparent 0) center / 16px 11px no-repeat,
    linear-gradient(#fff, #eef1f6);
}

/* triangles */
.tri { display: block; width: 20px; height: 14px; background: #666; flex: none; }
.tri.up { clip-path: polygon(50% 0, 100% 100%, 0 100%); }
.tri.down { clip-path: polygon(0 0, 100% 0, 50% 100%); }
.tri.left, .tri.right { width: 11px; height: 20px; }
.tri.left { clip-path: polygon(100% 0, 100% 100%, 0 50%); }
.tri.right { clip-path: polygon(0 0, 100% 50%, 0 100%); }
.namebox .tri { width: 16px; height: 9px; }
.nav .tri { background: #bdbdbd; }

/* scroll bars */
.vscroll { display: flex; flex-direction: column; width: 39px; margin: 5px 0 0 8px; background: #dadada; }
.vscroll button, .hscroll button, .vthumb, .hthumb { background: #fff; border: 2px solid #ababab; }
.vscroll button, .hscroll button { display: flex; align-items: center; justify-content: center; width: 39px; height: 40px; flex: none; }
.vthumb { height: 58px; margin-top: 2px; }
.vthumb.long { height: 84px; }
.vscroll .end { margin-top: auto; }
.hscroll { display: flex; width: 38%; height: 40px; margin-right: 52px; background: #dadada; }
.hthumb { flex: 1; margin-right: 69px; border-left: 0; }

/* sheet tabs */
.sheet-bar { display: flex; align-items: center; flex: none; height: 62px; }
.nav { padding: 0 25px; }
.nav:first-child { padding-left: 60px; }
.sheet-tabs { display: flex; align-self: flex-start; margin-left: 63px; font-size: 36px; line-height: 48px; }
.sheet-tabs a { height: 54px; padding: 0 29px; }
.sheet-tabs .first-tab { height: 46px; margin-top: 8px; padding: 0 25px 0 24px; border-left: 2px solid #999; line-height: 28px; }
.sheet-tabs .active {
  margin-top: -3px;
  height: 57px;
  position: relative;
  background: #fff;
  border: solid #999;
  border-width: 0 1px 5px;
  border-bottom-color: #12703e;
  color: #217346;
}
.window-back .sheet-tabs .active { line-height: 52px; }
.add { margin-left: 70px; }
.sheet-bar .dots { margin: 0 32px 0 auto; }

/* status bar */
.status {
  display: flex;
  align-items: center;
  flex: none;
  height: 56px;
  padding-right: 20px;
  border-top: 2px solid #c8c8c8;
  background: #f3f2f1;
}
.window-front .status { height: 58px; }
.window-back .status { padding-right: 50px; }
.ready { margin: 0 auto 0 18px; line-height: 40px; padding-bottom: 4px; }
.view { display: flex; align-items: center; justify-content: center; align-self: stretch; width: 107px; }
.view.on { background: #d2d0ce; }
.zoom { width: 34px; font-size: 36px; line-height: 40px; text-align: center; }
.view + .zoom { margin-left: 8px; }
.status input {
  appearance: none;
  width: 266px;
  height: 32px;
  margin: 0 7px;
  background: linear-gradient(#b5b3b1, #b5b3b1) center / 100% 3px no-repeat;
}
.status input::-webkit-slider-thumb { appearance: none; width: 13px; height: 30px; background: #777573; }
.percent { margin-left: 31px; line-height: 40px; }

/* overlays */
.pointer { position: absolute; left: 1590px; top: 224px; width: 480px; height: 354px; }
.watermark {
  position: absolute;
  right: 80px;
  bottom: 76px;
  display: flex;
  align-items: center;
  gap: 4px;
  color: #fff;
  font-family: "Noto Sans CJK SC", sans-serif;
  font-size: 106px;
  line-height: 140px;
  text-shadow: 0 0 2px #777, 0 0 2px #999;
}
.watermark .latin { font-family: "Noto Sans", sans-serif; font-size: 120px; }
.watermark svg { width: 100px; height: 106px; fill: #fdfdfd; filter: drop-shadow(0 0 4px #aaa); }
.watermark text { font-size: 42px; font-weight: 700; text-anchor: middle; fill: #bbb; }
```
